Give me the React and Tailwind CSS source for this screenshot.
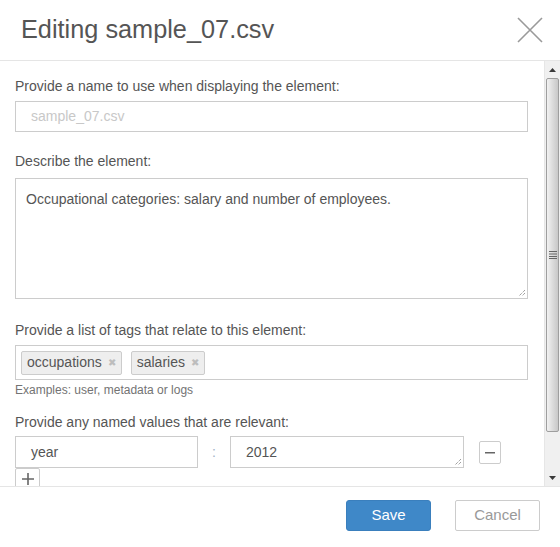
import React from 'react';

function Tag({ label }) {
  return (
    <span className="inline-flex items-center h-[24px] px-[5px] bg-[#eeeeee] border border-[#cccccc] rounded-[2px] text-[14px] text-[#555555] mr-[9px]">
      {label}
      <span className="ml-[6px] text-[10px] text-[#bdbdbd] leading-none">✖</span>
    </span>
  );
}

function FakeScrollbar() {
  return (
    <div className="w-[16px] bg-[#f0f0f0] border-l border-[#e6e6e6] flex flex-col">
      <div className="h-[17px] flex items-center justify-center">
        <svg width="7" height="4" viewBox="0 0 7 4"><path d="M0 4 L3.5 0 L7 4 Z" fill="#3a3a3a" /></svg>
      </div>
      <div className="h-[354px] mx-[1px] rounded-[2px] border border-[#9e9e9e] bg-gradient-to-r from-[#f2f2f2] via-[#dcdcdc] to-[#c8c8c8] flex items-center justify-center">
        <svg width="8" height="8" viewBox="0 0 8 8">
          <rect x="0" y="0" width="8" height="1" fill="#666" />
          <rect x="0" y="2.5" width="8" height="1" fill="#666" />
          <rect x="0" y="5" width="8" height="1" fill="#666" />
          <rect x="0" y="7" width="8" height="1" fill="#666" />
        </svg>
      </div>
      <div className="flex-1" />
      <div className="h-[17px] flex items-center justify-center">
        <svg width="7" height="4" viewBox="0 0 7 4"><path d="M0 0 L3.5 4 L7 0 Z" fill="#3a3a3a" /></svg>
      </div>
    </div>
  );
}

export default function App() {
  return (
    <div className="w-[560px] h-[547px] bg-white overflow-hidden flex flex-col" style={{ fontFamily: '"Liberation Sans", Arial, sans-serif' }}>
      {/* Header */}
      <div className="h-[61px] border-b border-[#e5e5e5] flex items-center justify-between pl-[21px] pr-[17px]">
        <h1 className="text-[25.3px] text-[#555555] font-normal leading-none">Editing sample_07.csv</h1>
        <svg width="26" height="26" viewBox="0 0 26 26" className="mb-[1px]">
          <path d="M1 1 L25 25 M25 1 L1 25" stroke="#9a9a9a" strokeWidth="1.6" />
        </svg>
      </div>

      {/* Body */}
      <div className="h-[425px] flex">
        <div className="flex-1 overflow-hidden pl-[15px] pr-[16px] pt-[15px] text-[#555555] text-[14px]">
          <div className="leading-[20px]">Provide a name to use when displaying the element:</div>
          <div className="mt-[5px] h-[31px] border border-[#cccccc] flex items-center pl-[15px] text-[#c8c8c8]">sample_07.csv</div>

          <div className="mt-[19px] leading-[20px]">Describe the element:</div>
          <div className="mt-[7px] h-[121px] border border-[#cccccc] relative px-[10px] pt-[10px] text-[#555555]">
            Occupational categories: salary and number of employees.
            <svg width="8" height="8" viewBox="0 0 8 8" className="absolute right-[1px] bottom-[1px]">
              <path d="M7 1 L1 7 M7 4 L4 7" stroke="#777" strokeWidth="1" strokeDasharray="1 1" />
            </svg>
          </div>

          <div className="mt-[21px] leading-[20px]">Provide a list of tags that relate to this element:</div>
          <div className="mt-[5px] h-[35px] border border-[#cccccc] flex items-center pl-[5px]">
            <Tag label="occupations" />
            <Tag label="salaries" />
          </div>
          <div className="mt-[2px] text-[12px] leading-[17px] text-[#737373]">Examples: user, metadata or logs</div>

          <div className="mt-[13px] leading-[20px]">Provide any named values that are relevant:</div>
          <div className="mt-[4px] flex items-start">
            <div className="w-[183px] h-[32px] border border-[#cccccc] flex items-center pl-[15px]">year</div>
            <div className="w-[32px] h-[32px] flex items-center justify-center text-[#9fb4c8]">:</div>
            <div className="w-[234px] h-[32px] border border-[#cccccc] flex items-center pl-[15px] relative">
              2012
              <svg width="8" height="8" viewBox="0 0 8 8" className="absolute right-[1px] bottom-[1px]">
                <path d="M7 1 L1 7 M7 4 L4 7" stroke="#777" strokeWidth="1" strokeDasharray="1 1" />
              </svg>
            </div>
            <div className="ml-[15px] mt-[5px] w-[22px] h-[23px] border border-[#cccccc] rounded-[2px] flex items-center justify-center">
              <svg width="10" height="2" viewBox="0 0 10 2"><rect width="10" height="1.5" fill="#666" /></svg>
            </div>
          </div>
          <div className="w-[25px] h-[22px] border border-[#cccccc] rounded-[2px] flex items-center justify-center">
            <svg width="14" height="14" viewBox="0 0 14 14"><path d="M7 1 V13 M1 7 H13" stroke="#666" strokeWidth="1.6" /></svg>
          </div>
        </div>
        <FakeScrollbar />
      </div>

      {/* Footer */}
      <div className="flex-1 border-t border-[#e5e5e5] flex items-start justify-end pt-[13px] pr-[20px] gap-[24px]">
        <button className="w-[85px] h-[31px] rounded-[3px] bg-[#3f88c8] border border-[#3a7fbd] text-white text-[15px]">Save</button>
        <button className="w-[85px] h-[31px] rounded-[2px] bg-white border border-[#cccccc] text-[#999999] text-[15px]">Cancel</button>
      </div>
    </div>
  );
}
